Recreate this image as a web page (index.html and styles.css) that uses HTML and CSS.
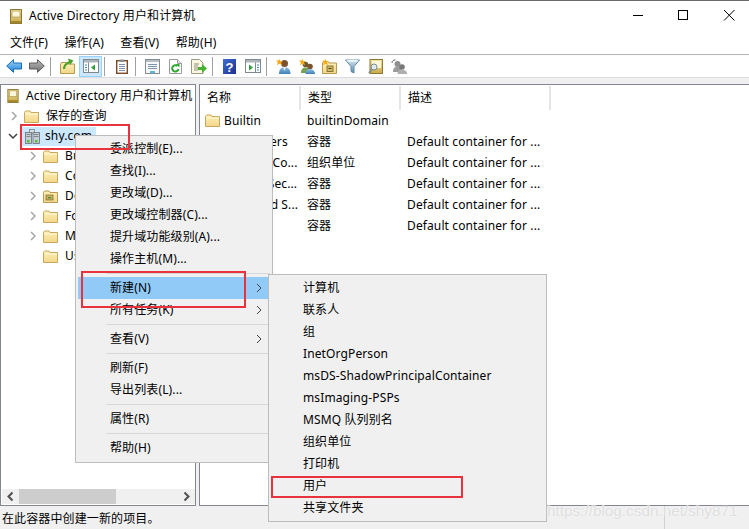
FILE: index.html
```html
<!DOCTYPE html>
<html lang="zh-CN">
<head>
<meta charset="utf-8">
<title>Active Directory 用户和计算机</title>
<link rel="stylesheet" href="styles.css">
</head>
<body>
<svg class="defs" aria-hidden="true">
  <defs>
    <linearGradient id="gBlue" x1="0" y1="0" x2="0" y2="1"><stop offset="0" stop-color="#9fd8fa"/><stop offset="1" stop-color="#1c7fd6"/></linearGradient>
    <linearGradient id="gGray" x1="0" y1="0" x2="0" y2="1"><stop offset="0" stop-color="#bdbdbd"/><stop offset="1" stop-color="#6f6f6f"/></linearGradient>
    <linearGradient id="gFold" x1="0" y1="0" x2="0" y2="1"><stop offset="0" stop-color="#fdf0b8"/><stop offset="1" stop-color="#f3d68a"/></linearGradient>
    <linearGradient id="gBook" x1="0" y1="0" x2="0" y2="1"><stop offset="0" stop-color="#f1e3a0"/><stop offset="1" stop-color="#c9a94a"/></linearGradient>
    <linearGradient id="gHelp" x1="0" y1="0" x2="1" y2="1"><stop offset="0" stop-color="#3f6fd0"/><stop offset="1" stop-color="#1c2f8f"/></linearGradient>
    <linearGradient id="gFun" x1="0" y1="0" x2="0" y2="1"><stop offset="0" stop-color="#cfe3ef"/><stop offset="1" stop-color="#5f90ac"/></linearGradient>
    <linearGradient id="gBody" x1="0" y1="0" x2="0" y2="1"><stop offset="0" stop-color="#8fc0e6"/><stop offset="1" stop-color="#3f7fb5"/></linearGradient>
  </defs>
  <symbol id="book" viewBox="0 0 12 15">
    <rect x=".5" y=".5" width="11" height="14" fill="url(#gBook)" stroke="#8f7a35"/>
    <rect x="2" y="2" width="8" height="6" fill="#fbf6d8" stroke="#a08a40" stroke-width=".6"/>
    <rect x="1" y="12" width="10" height="2" fill="#a38628"/>
  </symbol>
  <symbol id="folder" viewBox="0 0 15 13">
    <path d="M.5 12.5V2.5l1-1.5H6l1 1.5h7.500v10z" fill="url(#gFold)" stroke="#c9a85c"/>
    <path d="M1.500 4h12.500" stroke="#fff8d8"/>
  </symbol>
  <symbol id="folder-dc" viewBox="0 0 15 13">
    <path d="M.5 12.500V2.500l1-1.500H6l1 1.500h7.500v10z" fill="url(#gFold)" stroke="#b79a50"/>
    <rect x="3" y="5" width="7" height="5" fill="#c8b060" stroke="#7d6a2a" stroke-width=".7"/>
    <rect x="5" y="7" width="3" height="1.500" fill="#5d8f3c"/>
  </symbol>
  <symbol id="server" viewBox="0 0 15 15">
    <rect x="4.500" y=".5" width="5" height="4" fill="#d5dbde" stroke="#6d7880" stroke-width=".7"/>
    <rect x=".5" y="3.500" width="6" height="11" fill="#c6ced2" stroke="#66717a" stroke-width=".8"/>
    <rect x="8" y="3.500" width="6.500" height="11" fill="#c6ced2" stroke="#66717a" stroke-width=".8"/>
    <path d="M1.500 5.500h4M1.500 7.500h4M9 5.500h4.500M9 7.500h4.500" stroke="#7d8990"/>
    <rect x="2" y="11" width="2.500" height="2.500" fill="#4fc23b"/>
    <rect x="10" y="11" width="2.500" height="2.500" fill="#4fc23b"/>
  </symbol>
  <symbol id="ch-r" viewBox="0 0 8 10"><path d="M2 1l4 4-4 4" fill="none" stroke="#a6a6a6" stroke-width="1.500"/></symbol>
  <symbol id="ch-d" viewBox="0 0 10 8"><path d="M1 2l4 4 4-4" fill="none" stroke="#404040" stroke-width="1.500"/></symbol>
  <symbol id="back" viewBox="0 0 16 14"><path d="M.7 7L7.500.7v3.300h8v6h-8v3.300z" fill="url(#gBlue)" stroke="#1a6db8"/></symbol>
  <symbol id="fwd" viewBox="0 0 16 14"><path d="M15.300 7L8.500.7v3.300h-8v6h8v3.300z" fill="url(#gGray)" stroke="#5d5d5d"/></symbol>
  <symbol id="up" viewBox="0 0 15 16">
    <path d="M.5 15.500V6l1-1.500H6l1 1.500h7.500v9.500z" fill="url(#gFold)" stroke="#b59a50"/>
    <path d="M4 11C4 7 7 5 10 4" fill="none" stroke="#4aa12a" stroke-width="2.200"/>
    <path d="M8 .5l5.500 2-3.500 4.500z" fill="#4aa12a"/>
  </symbol>
  <symbol id="pane-l" viewBox="0 0 16 14">
    <rect x=".5" y=".5" width="15" height="13" fill="#fff" stroke="#7f8990"/>
    <rect x="1" y="1" width="14" height="2.500" fill="#aeb6bc"/>
    <path d="M5.500 3.500v10" stroke="#7f8990"/>
    <path d="M2 6h2M2 8.500h2M2 11h2" stroke="#3f85c9" stroke-width="1.200"/>
    <path d="M12 5.500v6l-4-3z" fill="#2f9e3f"/>
  </symbol>
  <symbol id="pane-r" viewBox="0 0 16 14">
    <rect x=".5" y=".5" width="15" height="13" fill="#fff" stroke="#7f8990"/>
    <rect x="1" y="1" width="14" height="2.500" fill="#aeb6bc"/>
    <path d="M10.500 3.500v10" stroke="#7f8990"/>
    <path d="M12 6h2M12 8.500h2M12 11h2" stroke="#3f85c9" stroke-width="1.200"/>
    <path d="M4 5.500v6l4-3z" fill="#2f9e3f"/>
  </symbol>
  <symbol id="clip" viewBox="0 0 12 15">
    <rect x=".7" y="1.700" width="10.600" height="12.600" fill="#fff" stroke="#7b4a24" stroke-width="1.400"/>
    <rect x="3.500" y=".5" width="5" height="2.500" fill="#8a8f92"/>
    <path d="M3 5.500h6M3 7.500h6M3 9.500h6M3 11.500h6" stroke="#7b93a8"/>
  </symbol>
  <symbol id="prop" viewBox="0 0 15 15">
    <rect x=".5" y=".5" width="14" height="14" fill="#f6f7f8" stroke="#868d92"/>
    <rect x="1" y="1" width="13" height="2" fill="#b9bec2"/>
    <path d="M3 5.500h9M3 7.500h9M3 9.500h9" stroke="#7d94ac"/>
    <rect x="5" y="12" width="5" height="2" fill="#5fb8e0"/>
  </symbol>
  <symbol id="refresh" viewBox="0 0 13 15">
    <path d="M.5.5h8l4 4v10H.5z" fill="#fff" stroke="#9a9a9a"/>
    <path d="M8.500.5v4h4" fill="#e2e2e2" stroke="#9a9a9a"/>
    <path d="M9.500 10a3.200 3.200 0 1 1-1-3" fill="none" stroke="#2ea52e" stroke-width="2"/>
    <path d="M7 5l3.500 0v3.500z" fill="#2ea52e"/>
  </symbol>
  <symbol id="export" viewBox="0 0 16 15">
    <path d="M.5.5h8l3.500 3.500v10.500H.5z" fill="#fdf8e4" stroke="#9a9a85"/>
    <path d="M3 5h5M3 7h4M3 9h4M3 11h4" stroke="#8d8d7a"/>
    <path d="M7 8h4V5l5 4.500-5 4.500v-3H7z" fill="#46b02f"/>
  </symbol>
  <symbol id="star" viewBox="0 0 8 8"><path d="M4 0l1 2.600L8 2 5.800 4 7 7 4 5.400 1 7l1.200-3L0 2l3-.4z" fill="#f6a818"/></symbol>
  <symbol id="user" viewBox="0 0 15 15">
    <circle cx="8.500" cy="4.500" r="3.500" fill="#7a5230"/>
    <path d="M3 15c0-5 2.500-7 5.500-7s6 2 6 7z" fill="url(#gBody)"/>
    <path d="M7 8h3l-1.500 4z" fill="#eef4f8"/>
    <use href="#star" x="0" y="0" width="7" height="7"/>
  </symbol>
  <symbol id="group" viewBox="0 0 16 15">
    <circle cx="6.500" cy="5.500" r="2.800" fill="#6c5a30"/>
    <path d="M2 14c0-4 2-5.500 4.500-5.500S11 10 11 14z" fill="#7aa052"/>
    <circle cx="11" cy="7.500" r="2.800" fill="#7a5230"/>
    <path d="M6.500 15c0-3.500 2-5 4.500-5s5 1.500 5 5z" fill="url(#gBody)"/>
    <use href="#star" x="0" y="0" width="7" height="7"/>
  </symbol>
  <symbol id="ou" viewBox="0 0 15 15">
    <path d="M.5 14.500V4l1-1.500H6L7 4h7.500v10.500z" fill="url(#gFold)" stroke="#b59a50"/>
    <rect x="5" y="7" width="6" height="5.500" fill="#d5bb63" stroke="#6f5f25" stroke-width=".8"/>
    <path d="M6.500 9.500h3" stroke="#4b4012"/>
    <use href="#star" x="0" y="0" width="7" height="7"/>
  </symbol>
  <symbol id="filter" viewBox="0 0 15 15">
    <path d="M.5 1h14L9 7.500V14l-3-1.500v-5z" fill="url(#gFun)" stroke="#5f8aa3"/>
    <ellipse cx="7.500" cy="1.800" rx="6" ry="1" fill="#eff6fa"/>
  </symbol>
  <symbol id="find" viewBox="0 0 15 15">
    <rect x="2" y=".5" width="12.500" height="14" fill="url(#gBook)" stroke="#8f7a35"/>
    <rect x="4" y="2" width="9" height="7" fill="#fbf6d8"/>
    <circle cx="6" cy="8" r="3" fill="#dfeaf0" stroke="#7d8a90"/>
    <path d="M3.800 10.500L.8 14" stroke="#7d8a90" stroke-width="1.600"/>
  </symbol>
  <symbol id="gusers" viewBox="0 0 16 15">
    <path d="M1 4C1 2 2.500.5 4.500 1" fill="none" stroke="#666"/>
    <circle cx="6.500" cy="5" r="3" fill="#8f8f8f"/>
    <path d="M2 13c0-4 2-5.500 4.500-5.500S11 9 11 13z" fill="#9c9c9c"/>
    <circle cx="11" cy="8" r="2.800" fill="#777"/>
    <path d="M6.500 15c0-3 2-4.500 4.500-4.500s5 1.500 5 4.500z" fill="#aeaeae"/>
  </symbol>
</svg>

<header class="titlebar">
  <svg class="ic-book"><use href="#book"/></svg>
  <span class="title-text">Active Directory 用户和计算机</span>
  <div class="winbtns">
    <svg class="winbtn" viewBox="0 0 46 22"><path d="M22 10.500h10" stroke="#000" fill="none"/></svg>
    <svg class="winbtn" viewBox="0 0 46 22"><rect x="21.500" y="5.500" width="9" height="9" stroke="#000" fill="none"/></svg>
    <svg class="winbtn" viewBox="0 0 46 22"><path d="M21 5l10.500 10.500M31.500 5L21 15.500" stroke="#000" fill="none"/></svg>
  </div>
</header>

<nav class="menubar">
  <span class="menubar-item">文件(F)</span>
  <span class="menubar-item">操作(A)</span>
  <span class="menubar-item">查看(V)</span>
  <span class="menubar-item">帮助(H)</span>
</nav>

<div class="toolbar">
  <span class="tb"><svg class="i16"><use href="#back"/></svg></span>
  <span class="tb"><svg class="i16"><use href="#fwd"/></svg></span>
  <span class="tb-sep"></span>
  <span class="tb"><svg class="i15h"><use href="#up"/></svg></span>
  <span class="tb tb-on"><svg class="i16"><use href="#pane-l"/></svg></span>
  <span class="tb-sep"></span>
  <span class="tb"><svg class="i12"><use href="#clip"/></svg></span>
  <span class="tb-sep"></span>
  <span class="tb"><svg class="i15"><use href="#prop"/></svg></span>
  <span class="tb"><svg class="i13"><use href="#refresh"/></svg></span>
  <span class="tb"><svg class="i16b"><use href="#export"/></svg></span>
  <span class="tb-sep"></span>
  <span class="tb"><svg class="i13" viewBox="0 0 13 15"><rect width="13" height="15" fill="url(#gHelp)"/><text x="6.500" y="12.500" class="help-q">?</text></svg></span>
  <span class="tb"><svg class="i16"><use href="#pane-r"/></svg></span>
  <span class="tb-sep"></span>
  <span class="tb"><svg class="i15"><use href="#user"/></svg></span>
  <span class="tb"><svg class="i16b"><use href="#group"/></svg></span>
  <span class="tb"><svg class="i15"><use href="#ou"/></svg></span>
  <span class="tb"><svg class="i15"><use href="#filter"/></svg></span>
  <span class="tb"><svg class="i15"><use href="#find"/></svg></span>
  <span class="tb"><svg class="i16b"><use href="#gusers"/></svg></span>
</div>

<main class="panes">
  <section class="tree-pane">
    <div class="tree">
      <div class="tree-row tree-top">
        <svg class="tree-book"><use href="#book"/></svg>
        <span class="tree-root">Active Directory 用户和计算机</span>
      </div>
      <div class="tree-row lvl1">
        <svg class="chev"><use href="#ch-r"/></svg>
        <svg class="fold"><use href="#folder"/></svg>
        <span>保存的查询</span>
      </div>
      <div class="tree-row lvl1b">
        <svg class="chev-d"><use href="#ch-d"/></svg>
        <span class="sel"><svg class="fold"><use href="#server"/></svg><span>shy.com</span></span>
      </div>
      <div class="tree-row lvl2"><svg class="chev"><use href="#ch-r"/></svg><svg class="fold"><use href="#folder"/></svg><span>Builtin</span></div>
      <div class="tree-row lvl2"><svg class="chev"><use href="#ch-r"/></svg><svg class="fold"><use href="#folder"/></svg><span>Computers</span></div>
      <div class="tree-row lvl2"><svg class="chev"><use href="#ch-r"/></svg><svg class="fold"><use href="#folder-dc"/></svg><span>Domain Controllers</span></div>
      <div class="tree-row lvl2"><svg class="chev"><use href="#ch-r"/></svg><svg class="fold"><use href="#folder"/></svg><span>ForeignSecurityPrincipals</span></div>
      <div class="tree-row lvl2"><svg class="chev"><use href="#ch-r"/></svg><svg class="fold"><use href="#folder"/></svg><span>Managed Service Accounts</span></div>
      <div class="tree-row lvl2 nochev"><svg class="fold"><use href="#folder"/></svg><span>Users</span></div>
    </div>
    <div class="hscroll">
      <svg class="sb-arrow" viewBox="0 0 17 15"><path d="M10.500 3.500L6.500 7.500l4 4" fill="none" stroke="#505050" stroke-width="2"/></svg>
      <div class="sb-track"><div class="sb-thumb"></div></div>
      <svg class="sb-arrow" viewBox="0 0 17 15"><path d="M6.500 3.500l4 4-4 4" fill="none" stroke="#505050" stroke-width="2"/></svg>
    </div>
  </section>

  <section class="list-pane">
    <div class="list-head">
      <span class="lh">名称</span><span class="lh">类型</span><span class="lh lh-desc">描述</span>
    </div>
    <div class="list-row"><span class="name"><svg class="fold"><use href="#folder"/></svg>Builtin</span><span>builtinDomain</span><span></span></div>
    <div class="list-row"><span class="name"><svg class="fold"><use href="#folder"/></svg>Computers</span><span>容器</span><span>Default container for ...</span></div>
    <div class="list-row"><span class="name"><svg class="fold"><use href="#folder"/></svg>Domain Co...</span><span>组织单位</span><span>Default container for ...</span></div>
    <div class="list-row"><span class="name"><svg class="fold"><use href="#folder"/></svg>ForeignSec...</span><span>容器</span><span>Default container for ...</span></div>
    <div class="list-row"><span class="name"><svg class="fold"><use href="#folder"/></svg>Managed S...</span><span>容器</span><span>Default container for ...</span></div>
    <div class="list-row"><span class="name"><svg class="fold"><use href="#folder"/></svg>Users</span><span>容器</span><span>Default container for ...</span></div>
  </section>
</main>

<footer class="statusbar">
  <span class="status-main">在此容器中创建一新的项目。</span>
  <span class="status-cell"></span>
</footer>

<div class="menu menu-main">
  <div class="mi">委派控制(E)...</div>
  <div class="mi">查找(I)...</div>
  <div class="mi">更改域(D)...</div>
  <div class="mi">更改域控制器(C)...</div>
  <div class="mi">提升域功能级别(A)...</div>
  <div class="mi">操作主机(M)...</div>
  <div class="msep"></div>
  <div class="mi mi-on">新建(N)<svg class="arrow" viewBox="0 0 6 10"><path d="M1 1l4 4-4 4" fill="none" stroke="#404040"/></svg></div>
  <div class="mi">所有任务(K)<svg class="arrow" viewBox="0 0 6 10"><path d="M1 1l4 4-4 4" fill="none" stroke="#404040"/></svg></div>
  <div class="msep"></div>
  <div class="mi">查看(V)<svg class="arrow" viewBox="0 0 6 10"><path d="M1 1l4 4-4 4" fill="none" stroke="#404040"/></svg></div>
  <div class="msep"></div>
  <div class="mi">刷新(F)</div>
  <div class="mi">导出列表(L)...</div>
  <div class="msep"></div>
  <div class="mi">属性(R)</div>
  <div class="msep"></div>
  <div class="mi">帮助(H)</div>
</div>

<div class="menu menu-sub">
  <div class="mi">计算机</div>
  <div class="mi">联系人</div>
  <div class="mi">组</div>
  <div class="mi">InetOrgPerson</div>
  <div class="mi">msDS-ShadowPrincipalContainer</div>
  <div class="mi">msImaging-PSPs</div>
  <div class="mi">MSMQ 队列别名</div>
  <div class="mi">组织单位</div>
  <div class="mi">打印机</div>
  <div class="mi">用户</div>
  <div class="mi">共享文件夹</div>
</div>

<div class="mark mark-domain"></div>
<div class="mark mark-new"></div>
<div class="mark mark-user"></div>
<div class="watermark">https://blog.csdn.net/shy871</div>
</body>
</html>
```

FILE: styles.css
```css
* { box-sizing: border-box; }
html, body { margin: 0; padding: 0; }
body {
  position: relative;
  width: 749px;
  height: 529px;
  overflow: hidden;
  display: flex;
  flex-direction: column;
  background: #fff;
  color: #000;
  font: 12px/20px "Noto Sans", "Noto Sans CJK SC", sans-serif;
  letter-spacing: .12px;
}
svg { display: block; flex: none; }
.defs { width: 0; height: 0; }

.titlebar {
  height: 31px;
  flex: none;
  display: flex;
  align-items: center;
  padding-left: 10px;
  border-top: 1px solid #6b6b6b;
}
.ic-book { width: 12px; height: 15px; margin-right: 7px; }
.winbtns { margin-left: auto; display: flex; align-items: center; }
.winbtn { width: 46px; height: 22px; }

.menubar {
  height: 24px;
  flex: none;
  display: flex;
  align-items: center;
  padding-left: 2px;
  border-bottom: 1px solid #b4b4b4;
}
.menubar-item { padding: 0 8px; margin-right: .4px; }

.toolbar {
  height: 23px;
  flex: none;
  display: flex;
  align-items: center;
  padding-left: 2px;
  border-bottom: 1px solid #dcdcdc;
}
.tb { width: 23px; height: 21px; display: flex; align-items: center; justify-content: center; border: 1px solid transparent; }
.tb-on { background: #cce8ff; border-color: #99d1ff; }
.tb-sep { width: 1px; height: 19px; background: #a0a0a0; margin: 0 5px 0 2px; }
.i16 { width: 16px; height: 14px; }
.i16b { width: 16px; height: 15px; }
.i15 { width: 15px; height: 15px; }
.i15h { width: 15px; height: 16px; }
.i13 { width: 13px; height: 15px; }
.i12 { width: 12px; height: 15px; }
.help-q { font: bold 13px "Liberation Sans", sans-serif; fill: #fff; text-anchor: middle; }

.panes {
  flex: 1;
  min-height: 0;
  display: flex;
  background: #f0f0f0;
  padding-top: 6px;
  gap: 3px;
}
.tree-pane {
  width: 196px;
  flex: none;
  display: flex;
  flex-direction: column;
  background: #fff;
  border: 1px solid #82878f;
}
.tree { flex: 1; min-height: 0; overflow: hidden; white-space: nowrap; padding-top: 1px; }
.tree-row { height: 20px; display: flex; align-items: center; }
.tree-top { padding-left: 6px; }
.tree-book { width: 12px; height: 14px; margin-right: 7px; }
.lvl1 { padding-left: 9px; }
.lvl1b { padding-left: 7px; }
.lvl2 { padding-left: 28px; }
.nochev { padding-left: 42px; }
.chev { width: 8px; height: 10px; margin-right: 6px; }
.chev-d { width: 10px; height: 8px; margin-right: 4px; }
.fold { width: 15px; height: 13px; margin-right: 7px; }
.sel { display: flex; align-items: center; height: 19px; background: #cce8ff; padding: 0 4px 0 3px; }
.sel .fold { height: 15px; margin-right: 5px; }
.hscroll { height: 17px; flex: none; display: flex; align-items: center; padding: 0 0 1px 1px; }
.sb-arrow { width: 17px; height: 15px; background: #f0f0f0; }
.sb-track { flex: 1; height: 15px; background: #f0f0f0; }
.sb-thumb { width: 97px; height: 15px; background: #cdcdcd; }

.list-pane { flex: 1; min-width: 0; background: #fff; border: 1px solid #82878f; border-right: 0; padding-top: 1px; }
.list-head { display: flex; height: 24px; }
.lh { height: 24px; line-height: 24px; padding-left: 7px; width: 100px; border-right: 2px solid #e5e5e5; }
.lh:first-child { width: 101px; }
.lh-desc { width: 150px; }
.list-row { display: grid; grid-template-columns: 107px 100px 1fr; height: 21px; align-items: center; }
.name { display: flex; align-items: center; padding-left: 5px; white-space: nowrap; }
.name .fold { margin-right: 4px; }

.statusbar { height: 23px; flex: none; display: flex; background: #f0f0f0; }
.status-main { flex: 1; padding-left: 2px; line-height: 25px; }
.status-cell { width: 85px; border-left: 1px solid #d0d0d0; }

.menu {
  position: absolute;
  background: #f0f0f0;
  border: 1px solid #bcbcbc;
  padding: 2px;
}
.menu-main { left: 75px; top: 135px; width: 198px; padding-bottom: 3px; }
.menu-sub { left: 268px; top: 274px; width: 279px; }
.mi { position: relative; height: 22px; line-height: 22px; padding-left: 32px; white-space: nowrap; }
.mi-on { background: #91c9f7; }
.msep { height: 1px; background: #d7d7d7; margin: 3px 0 3px 28px; }
.arrow { position: absolute; right: 8px; top: 6px; width: 6px; height: 10px; }

.mark { position: absolute; border: 2px solid #e8323c; }
.mark-domain { left: 20px; top: 124px; width: 110px; height: 26px; }
.mark-new { left: 81px; top: 271px; width: 165px; height: 37px; }
.mark-user { left: 271px; top: 476px; width: 192px; height: 22px; }

.watermark {
  position: absolute;
  left: 547px;
  top: 501px;
  font: 15.300px/20px "Liberation Sans", sans-serif;
  letter-spacing: 0;
  color: #dedede;
  text-shadow: 0 0 2px #fff;
  white-space: nowrap;
}
```
